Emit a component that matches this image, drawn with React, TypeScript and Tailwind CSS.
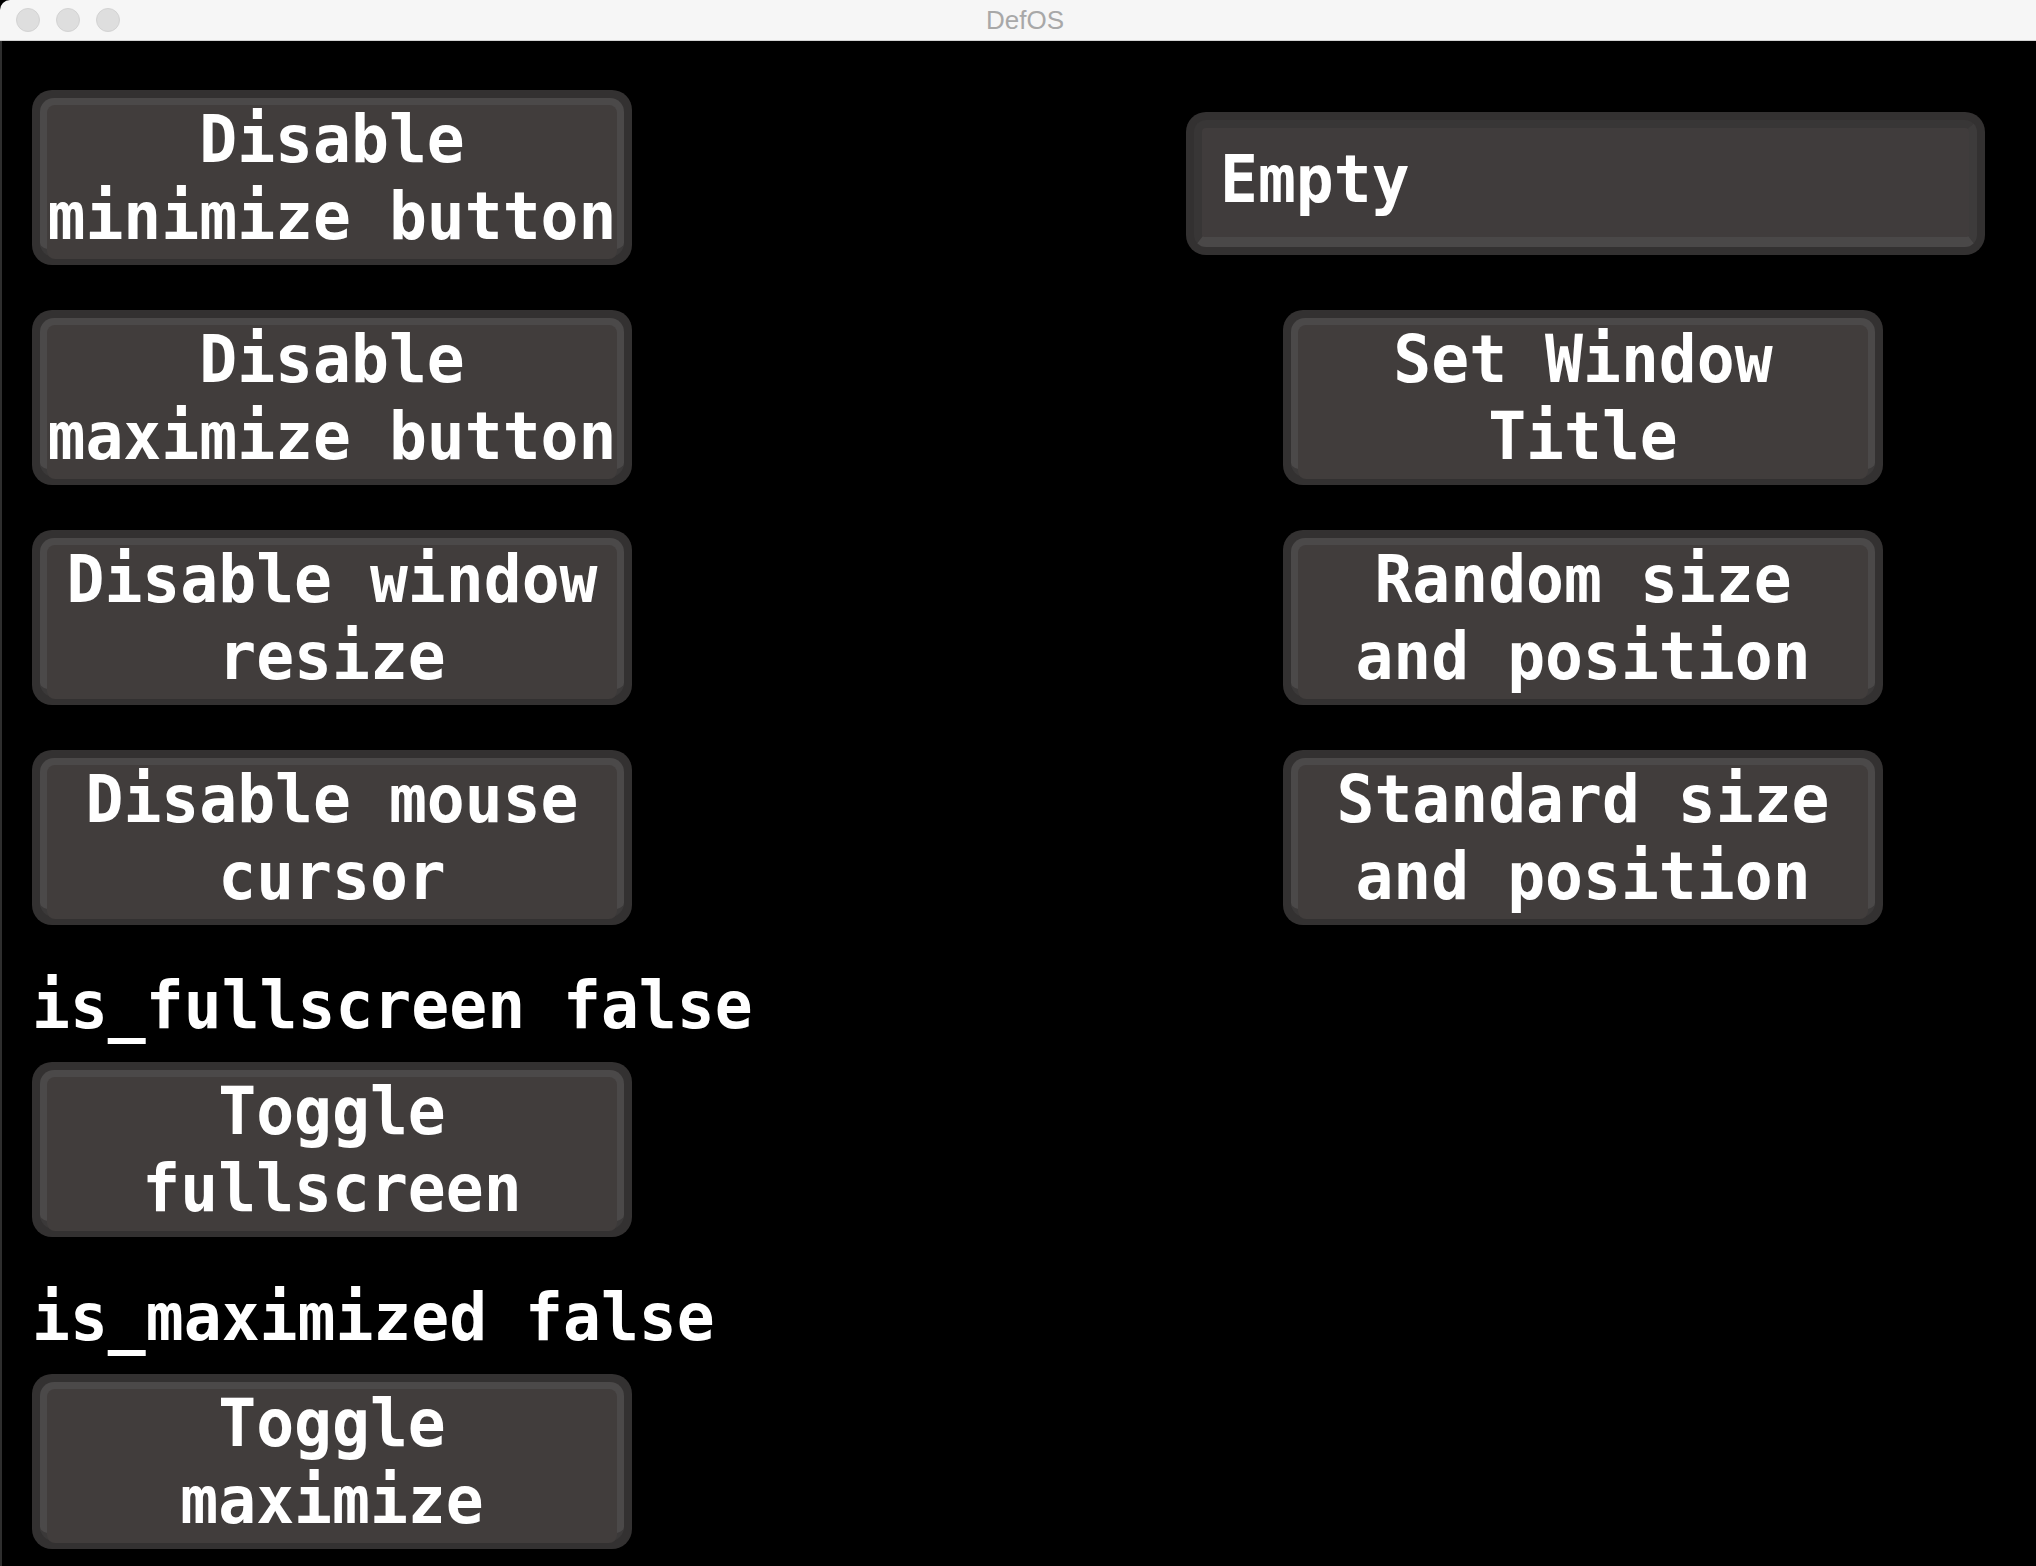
const mono = "font-['DejaVu_Sans_Mono',monospace] font-bold text-white";

function DefButton({ lines }: { lines: string[] }) {
  return (
    <div className="h-[175px] w-[600px] shrink-0 rounded-[20px] bg-[#333131] p-2">
      <div className="flex h-full flex-col rounded-[14px] border-b-[7px] border-[#3b3939] bg-[#4b4949] px-[7px] pt-[7px] pb-[5px]">
        <div className="flex flex-1 items-center justify-center rounded-[8px] bg-[#413d3c] pb-2">
          <div className={`${mono} scale-y-[1.05] whitespace-nowrap text-center text-[63px] leading-[73px]`}>
            {lines.map((line) => (
              <div key={line}>{line}</div>
            ))}
          </div>
        </div>
      </div>
    </div>
  );
}

function Field({ value }: { value: string }) {
  return (
    <div className="mt-[22px] mb-[10px] h-[143px] w-[799px] rounded-[20px] bg-[#333131] p-2">
      <div className="h-full rounded-[12px] border-t-8 border-r-8 border-b-[10px] border-l-8 border-t-[#383636] border-r-[#3d3b3b] border-b-[#4a4848] border-l-[#383636] bg-[#403c3c]">
        <div className={`${mono} flex h-full items-center pb-[5px] pl-[18px] text-[63px] leading-[76px]`}>
          <span className="scale-y-[1.05]">{value}</span>
        </div>
      </div>
    </div>
  );
}

function Label({ children }: { children: string }) {
  return (
    <div className="h-[92px]">
      <div className={`${mono} -mt-[2px] scale-y-[1.05] whitespace-nowrap text-[63px] leading-[76px]`}>
        {children}
      </div>
    </div>
  );
}

export default function App() {
  return (
    <div className="h-[1566px] w-full overflow-hidden bg-black">
      <div className="relative flex h-[41px] items-center rounded-tl-[10px] border-b border-[#d2d2d2] bg-[#f6f6f6]">
        <div className="flex gap-4 pl-4">
          <span className="h-6 w-6 rounded-full border border-[#d3d3d3] bg-[#dedede]" />
          <span className="h-6 w-6 rounded-full border border-[#d3d3d3] bg-[#dedede]" />
          <span className="h-6 w-6 rounded-full border border-[#d3d3d3] bg-[#dedede]" />
        </div>
        <div className="absolute inset-0 flex justify-center pl-[14px] font-['Liberation_Sans',Arial,sans-serif] text-[26px] leading-[41px] text-[#a8a8a8]">
          DefOS
        </div>
      </div>

      <div className="flex h-full border-l-2 border-[#2e2e2e] pt-[49px] pl-[30px]">
        <div className="flex w-[600px] flex-col gap-[45px]">
          <DefButton lines={["Disable", "minimize button"]} />
          <DefButton lines={["Disable", "maximize button"]} />
          <DefButton lines={["Disable window", "resize"]} />
          <DefButton lines={["Disable mouse", "cursor"]} />
          <div className="flex flex-col">
            <Label>is_fullscreen false</Label>
            <DefButton lines={["Toggle", "fullscreen"]} />
          </div>
          <div className="flex flex-col">
            <Label>is_maximized false</Label>
            <DefButton lines={["Toggle", "maximize"]} />
          </div>
        </div>

        <div className="ml-[554px] flex flex-col gap-[45px]">
          <Field value="Empty" />
          <div className="ml-[97px]">
            <DefButton lines={["Set Window", "Title"]} />
          </div>
          <div className="ml-[97px]">
            <DefButton lines={["Random size", "and position"]} />
          </div>
          <div className="ml-[97px]">
            <DefButton lines={["Standard size", "and position"]} />
          </div>
        </div>
      </div>
    </div>
  );
}
